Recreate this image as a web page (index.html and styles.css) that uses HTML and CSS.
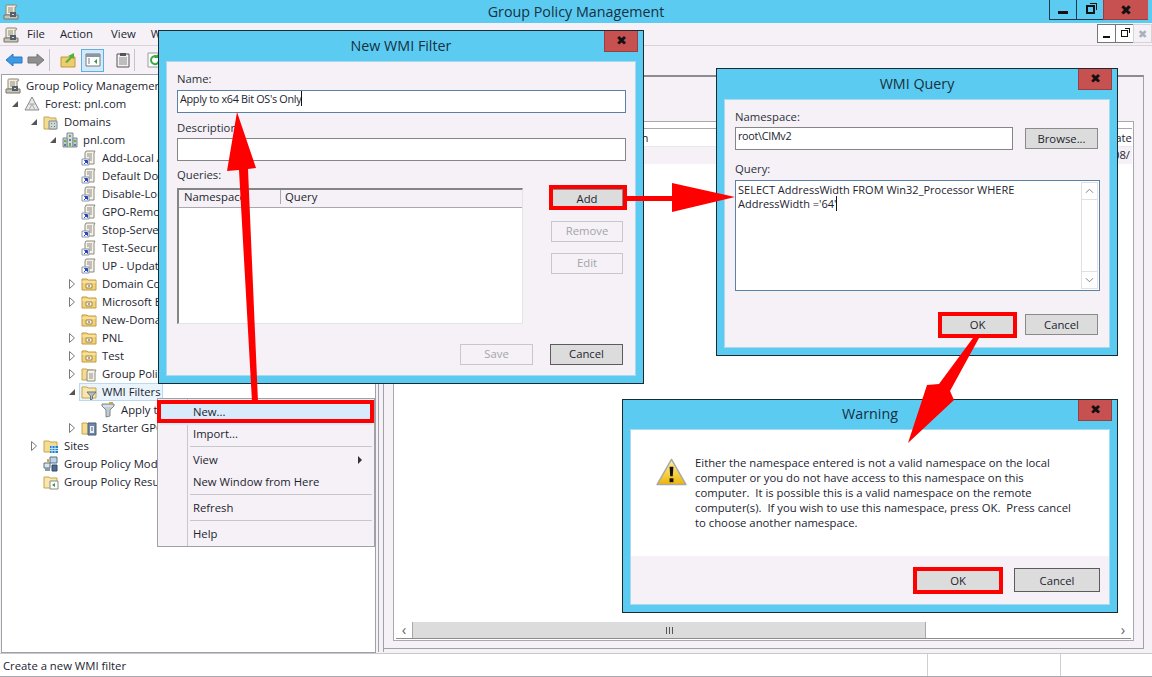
FILE: index.html
```html
<!DOCTYPE html>
<html lang="en">
<head>
  <meta charset="UTF-8" />
  <title>Group Policy Management</title>
  <link rel="stylesheet" href="styles.css">
</head>
<body>
  <svg class="defs" width="0" height="0">
    <symbol id="console" viewBox="0 0 16 16">
      <path d="M4 1h9c1 0 1 2 0 2h-1v8H3V3C3 2 3 1 4 1z" fill="#f3eeda" stroke="#8b8674"/>
      <path d="M5 4h5M5 6h5M5 8h5" stroke="#8e8e8e"/>
      <path d="M1 11h14v4H1z" fill="#c9c5b4" stroke="#77766c"/>
      <path d="M7 8h6v5H7z" fill="#55606b"/>
      <path d="M9 10h2v1H9z" fill="#d8dde0"/>
    </symbol>
    <symbol id="forest" viewBox="0 0 16 16">
      <path d="M8 1L15 14H1z" fill="#e8e8e8" stroke="#8b8b8b"/>
      <path d="M4.500 8h7M8 8l-3 6M8 8l3 6" stroke="#a8a8a8" fill="none"/>
    </symbol>
    <symbol id="domains" viewBox="0 0 16 16">
      <path d="M1 3h5l1 1h6v11H1z" fill="#f4dc92" stroke="#c8a44e"/>
      <path d="M6 7h8v8H6z" fill="#cfd6da" stroke="#7e8a92"/>
      <path d="M8 9h1v1H8zM11 9h1v1h-1zM8 12h1v1H8z" fill="#55a84a"/>
      <path d="M11 12h1v1h-1z" fill="#4a6e8e"/>
    </symbol>
    <symbol id="domain" viewBox="0 0 16 16">
      <path d="M5 1h6v14H5z" fill="#d5dade" stroke="#7e8a92"/>
      <path d="M1 6h4v9H1zM11 6h4v9h-4z" fill="#c2cbd1" stroke="#7e8a92"/>
      <path d="M7 3h2v2H7zM2 8h2v2H2zM12 8h2v2h-2zM7 11h2v3H7z" fill="#62b544"/>
      <path d="M7 7h2v2H7zM2 12h2v2H2zM12 12h2v2h-2z" fill="#5f7d96"/>
    </symbol>
    <symbol id="gpo" viewBox="0 0 16 16">
      <path d="M5 1h9l-1 2v11H4V3z" fill="#f5f1e4" stroke="#8b8b7e"/>
      <path d="M6 4h5M6 6h5M8 8h3M8 10h3" stroke="#8e8e8e"/>
      <path d="M1 9h7v6H1z" fill="#fff" stroke="#8a93a8"/>
      <path d="M3 14l3-3M3.500 10.500H6.500V13.500z" stroke="#2a46b8" fill="#2a46b8"/>
    </symbol>
    <symbol id="ou" viewBox="0 0 16 16">
      <path d="M1 3h5l1 1h8v10H1z" fill="#f2d27c" stroke="#c39a3e"/>
      <path d="M1 6h14" stroke="#fbeec0"/>
      <path d="M5 8h6v4H5z" fill="#fdf8e0" stroke="#a08a4a"/>
      <path d="M7 10h2" stroke="#555"/>
    </symbol>
    <symbol id="gpfolder" viewBox="0 0 16 16">
      <path d="M1 3h5l1 1h5v10H1z" fill="#f4dc92" stroke="#c8a44e"/>
      <path d="M7 4h8l-1 2v9H6V6z" fill="#f5f1e4" stroke="#8b8b7e"/>
      <path d="M8 8h4M8 10h4M8 12h4" stroke="#8e8e8e"/>
    </symbol>
    <symbol id="wmifolder" viewBox="0 0 16 16">
      <path d="M1 3h5l1 1h8v10H1z" fill="#f7e6ae" stroke="#c8a44e"/>
      <path d="M6 8h9l-3.500 4v3l-2 1v-4z" fill="#b4bcc2" stroke="#6c767c"/>
    </symbol>
    <symbol id="funnel" viewBox="0 0 16 16">
      <path d="M2 2h12v2l-4 4v6l-4 1V8L2 4z" fill="#c4ccd2" stroke="#7c868e"/>
      <path d="M3 4h10" stroke="#eef1f3"/>
      <path d="M9 1h4" stroke="#c8a44e" stroke-width="2"/>
    </symbol>
    <symbol id="starter" viewBox="0 0 16 16">
      <path d="M1 3h5l1 1h5v10H1z" fill="#f4dc92" stroke="#c8a44e"/>
      <path d="M7 3h8v12H7z" fill="#6e86a8" stroke="#4a5c74"/>
      <path d="M9 6h4v7H9z" fill="#e8eef4"/>
      <path d="M10 8h2M10 10h2" stroke="#4a5c74"/>
    </symbol>
    <symbol id="sites" viewBox="0 0 16 16">
      <path d="M1 3h5l1 1h7v10H1z" fill="#f4dc92" stroke="#c8a44e"/>
      <path d="M7 8h8v7H7z" fill="#1c82d4"/>
      <path d="M9 8v7M12 8v7M7 10.500h8M7 12.500h8" stroke="#bfe0f6"/>
    </symbol>
    <symbol id="model" viewBox="0 0 16 16">
      <path d="M7 1h7v6H7z" fill="#b8d4ec" stroke="#5e6e80"/>
      <path d="M1 7h6v5H1z" fill="#d8e4ee" stroke="#5e6e80"/>
      <path d="M2 12h5v3H2z" fill="#8a98a6"/>
      <path d="M9 9h5v6H9z" fill="#4a6a9a" stroke="#34465e"/>
      <path d="M4 3h2v3H4z" fill="#e2a23a"/>
    </symbol>
    <symbol id="results" viewBox="0 0 16 16">
      <path d="M1 3h5l1 1h7v10H1z" fill="#f7e6ae" stroke="#c8a44e"/>
      <path d="M7 7h8v8H7z" fill="#fff" stroke="#8b8b8b"/>
      <path d="M12 9l-3 2 3 2z" fill="#3c9a3c"/>
    </symbol>
    <symbol id="tw-open" viewBox="0 0 8 8"><path d="M7 1v6H1z" fill="#555"/></symbol>
    <symbol id="tw-closed" viewBox="0 0 8 12"><path d="M1.500 1.500l5 4.500-5 4.500z" fill="#fff" stroke="#7a7a7a"/></symbol>
  </svg>

  <header class="titlebar">
    <svg class="ico app-ico"><use href="#console"/></svg>
    <span class="titlebar-text">Group Policy Management</span>
    <div class="win-btns">
      <span class="win-btn"><span class="glyph-min"></span></span>
      <span class="win-btn"><span class="glyph-restore"></span></span>
      <span class="win-btn win-close">✖</span>
    </div>
  </header>

  <nav class="menubar">
    <svg class="ico app-ico"><use href="#console"/></svg>
    <span class="menu-item m-file">File</span>
    <span class="menu-item m-action">Action</span>
    <span class="menu-item m-view">View</span>
    <span class="menu-item m-window">Window</span>
    <span class="menu-item">Help</span>
    <div class="mdi-btns">
      <span class="mdi-btn"><span class="glyph-min small"></span></span>
      <span class="mdi-btn"><span class="glyph-restore small"></span></span>
      <span class="mdi-btn mdi-off">✖</span>
    </div>
  </nav>

  <div class="toolbar">
    <svg class="tool tool-back" viewBox="0 0 18 16"><path d="M1 8l7-6v3h9v6H8v3z" fill="#3d9be6" stroke="#2a78c0"/></svg>
    <svg class="tool tool-fwd" viewBox="0 0 18 16"><path d="M17 8l-7-6v3H1v6h9v3z" fill="#8f8f8f" stroke="#767676"/></svg>
    <span class="tool-sep"></span>
    <svg class="tool tool-up" viewBox="0 0 16 16"><path d="M1 5h14v10H1z" fill="#ecce6e" stroke="#c0993c"/><path d="M5 10l5-5-2-1 6-3v6l-2-1-5 5z" fill="#5cae3c"/></svg>
    <span class="tool-active">
      <svg class="tool" viewBox="0 0 16 16"><path d="M1 2h14v12H1z" fill="#fff" stroke="#6e7a84"/><path d="M1 2h14v3H1z" fill="#8a96a0"/><path d="M3 7h2M3 9h2M3 11h2" stroke="#6e7a84"/><path d="M12 7v5l-3-2.500z" fill="#3c9a3c"/></svg>
    </span>
    <svg class="tool tool-clip" viewBox="0 0 14 16"><path d="M1 2h12v13H1z" fill="#f2f2f2" stroke="#555"/><path d="M4 1h6v3H4z" fill="#555"/><path d="M3 6h8M3 8h8M3 10h8M3 12h8" stroke="#888"/></svg>
    <span class="tool-sep"></span>
    <svg class="tool tool-refresh" viewBox="0 0 16 16"><path d="M1 1h14v14H1z" fill="#fff" stroke="#9a9a9a"/><path d="M12 8a4 4 0 1 1-1.500-3" fill="none" stroke="#3ca83c" stroke-width="2"/><path d="M11 2v4H7z" fill="#3ca83c"/></svg>
  </div>

  <main class="panes">
    <section class="tree">
      <div class="row l0"><span class="twist"></span><span class="node"><svg class="ico"><use href="#console"/></svg>Group Policy Management</span></div>
      <div class="row l1"><svg class="twist"><use href="#tw-open"/></svg><span class="node"><svg class="ico"><use href="#forest"/></svg>Forest: pnl.com</span></div>
      <div class="row l2"><svg class="twist"><use href="#tw-open"/></svg><span class="node"><svg class="ico"><use href="#domains"/></svg>Domains</span></div>
      <div class="row l3"><svg class="twist"><use href="#tw-open"/></svg><span class="node"><svg class="ico"><use href="#domain"/></svg>pnl.com</span></div>
      <div class="row l4"><span class="twist"></span><span class="node"><svg class="ico"><use href="#gpo"/></svg>Add-Local Admins</span></div>
      <div class="row l4"><span class="twist"></span><span class="node"><svg class="ico"><use href="#gpo"/></svg>Default Dom</span></div>
      <div class="row l4"><span class="twist"></span><span class="node"><svg class="ico"><use href="#gpo"/></svg>Disable-Local</span></div>
      <div class="row l4"><span class="twist"></span><span class="node"><svg class="ico"><use href="#gpo"/></svg>GPO-Remote</span></div>
      <div class="row l4"><span class="twist"></span><span class="node"><svg class="ico"><use href="#gpo"/></svg>Stop-Server</span></div>
      <div class="row l4"><span class="twist"></span><span class="node"><svg class="ico"><use href="#gpo"/></svg>Test-Security</span></div>
      <div class="row l4"><span class="twist"></span><span class="node"><svg class="ico"><use href="#gpo"/></svg>UP - Update</span></div>
      <div class="row l4"><svg class="twist"><use href="#tw-closed"/></svg><span class="node"><svg class="ico"><use href="#ou"/></svg>Domain Controllers</span></div>
      <div class="row l4"><svg class="twist"><use href="#tw-closed"/></svg><span class="node"><svg class="ico"><use href="#ou"/></svg>Microsoft Exchange</span></div>
      <div class="row l4"><span class="twist"></span><span class="node"><svg class="ico"><use href="#ou"/></svg>New-Domain</span></div>
      <div class="row l4"><svg class="twist"><use href="#tw-closed"/></svg><span class="node"><svg class="ico"><use href="#ou"/></svg>PNL</span></div>
      <div class="row l4"><svg class="twist"><use href="#tw-closed"/></svg><span class="node"><svg class="ico"><use href="#ou"/></svg>Test</span></div>
      <div class="row l4"><svg class="twist"><use href="#tw-closed"/></svg><span class="node"><svg class="ico"><use href="#gpfolder"/></svg>Group Policy Objects</span></div>
      <div class="row l4"><svg class="twist"><use href="#tw-open"/></svg><span class="node node-sel"><svg class="ico"><use href="#wmifolder"/></svg>WMI Filters</span></div>
      <div class="row l5"><span class="twist"></span><span class="node"><svg class="ico"><use href="#funnel"/></svg>Apply to x64</span></div>
      <div class="row l4"><svg class="twist"><use href="#tw-closed"/></svg><span class="node"><svg class="ico"><use href="#starter"/></svg>Starter GPOs</span></div>
      <div class="row l2"><svg class="twist"><use href="#tw-closed"/></svg><span class="node"><svg class="ico"><use href="#sites"/></svg>Sites</span></div>
      <div class="row l2"><span class="twist"></span><span class="node"><svg class="ico"><use href="#model"/></svg>Group Policy Modeling</span></div>
      <div class="row l2"><span class="twist"></span><span class="node"><svg class="ico"><use href="#results"/></svg>Group Policy Results</span></div>
    </section>

    <div class="splitter"></div>

    <section class="detail">
      <div class="frame">
        <div class="table">
          <div class="thead"><span class="col-domain">Domain</span><span class="col-date">Date</span></div>
          <div class="tgroup"><span class="col-last">2008/</span></div>
          <div class="tbody"></div>
        </div>
        <div class="hscroll">
          <span class="sb-btn">‹</span>
          <span class="sb-thumb"><span class="grip"></span></span>
          <span class="sb-rest"></span>
          <span class="sb-btn">›</span>
        </div>
      </div>
    </section>
  </main>

  <footer class="statusbar">
    <span class="st-main">Create a new WMI filter</span>
    <span class="st-cell st-a"></span>
    <span class="st-cell st-b"></span>
  </footer>

  <div class="ctx-menu">
    <div class="ctx-item ctx-hot">New...</div>
    <div class="ctx-item">Import...</div>
    <div class="ctx-sep"></div>
    <div class="ctx-item">View<span class="ctx-arrow"></span></div>
    <div class="ctx-item">New Window from Here</div>
    <div class="ctx-sep"></div>
    <div class="ctx-item">Refresh</div>
    <div class="ctx-sep"></div>
    <div class="ctx-item">Help</div>
  </div>

  <div class="dialog dlg-filter">
    <div class="dlg-title">New WMI Filter</div>
    <span class="dlg-close">✖</span>
    <div class="dlg-body">
      <label class="lbl lbl-name">Name:</label>
      <div class="field field-focus">Apply to x64 Bit OS's Only<span class="caret"></span></div>
      <label class="lbl lbl-desc">Description:</label>
      <div class="field"></div>
      <label class="lbl lbl-queries">Queries:</label>
      <div class="queries">
        <div class="qlist">
          <div class="qhead"><span class="qh-ns">Namespace</span><span class="qh-q">Query</span></div>
        </div>
        <div class="qbtns">
          <button class="btn">Add</button>
          <button class="btn btn-off">Remove</button>
          <button class="btn btn-off">Edit</button>
        </div>
      </div>
      <div class="dlg-foot foot-filter">
        <button class="btn btn-off">Save</button>
        <button class="btn btn-dark">Cancel</button>
      </div>
    </div>
  </div>

  <div class="dialog dlg-query">
    <div class="dlg-title">WMI Query</div>
    <span class="dlg-close">✖</span>
    <div class="dlg-body">
      <label class="lbl lbl-ns">Namespace:</label>
      <div class="ns-row">
        <div class="field field-ns">root\CIMv2</div>
        <button class="btn">Browse...</button>
      </div>
      <label class="lbl lbl-query">Query:</label>
      <div class="textarea">
        <div class="ta-text">SELECT AddressWidth FROM Win32_Processor WHERE<br>AddressWidth ='64'<span class="caret"></span></div>
        <div class="vscroll">
          <span class="vs-btn"><svg viewBox="0 0 10 6"><path d="M1 5l4-4 4 4" fill="none" stroke="#777"/></svg></span>
          <span class="vs-track"></span>
          <span class="vs-btn"><svg viewBox="0 0 10 6"><path d="M1 1l4 4 4-4" fill="none" stroke="#777"/></svg></span>
        </div>
      </div>
      <div class="dlg-foot foot-query">
        <button class="btn">OK</button>
        <button class="btn">Cancel</button>
      </div>
    </div>
  </div>

  <div class="dialog dlg-warn">
    <div class="dlg-title">Warning</div>
    <span class="dlg-close">✖</span>
    <div class="warn-body">
      <div class="warn-main">
        <svg class="warn-ico" viewBox="0 0 32 30">
          <defs><linearGradient id="wg" x1="0" y1="0" x2="0" y2="1"><stop offset="0" stop-color="#fdf3a0"/><stop offset="1" stop-color="#f0b400"/></linearGradient></defs>
          <path d="M16 1.500L31 27.500H1z" fill="url(#wg)" stroke="#a8a8a8" stroke-width="1.500" stroke-linejoin="round"/>
          <path d="M14 9h4l-.7 10h-2.600z" fill="#111"/>
          <path d="M14 21h4v4h-4z" fill="#111"/>
        </svg>
        <div class="warn-text">Either the namespace entered is not a valid namespace on the local<br>computer or you do not have access to this namespace on this<br>computer.  It is possible this is a valid namespace on the remote<br>computer(s).  If you wish to use this namespace, press OK.  Press cancel<br>to choose another namespace.</div>
      </div>
      <div class="warn-foot">
        <button class="btn btn-wide">OK</button>
        <button class="btn btn-wide btn-dark">Cancel</button>
      </div>
    </div>
  </div>

  <!-- red arrows and boxes drawn on top of the screenshot -->
  <svg class="marks" viewBox="0 0 1152 677">
    <g fill="none" stroke="#f00" stroke-width="4">
      <rect x="551" y="187" width="74" height="21"/>
      <rect x="940" y="314" width="75" height="22"/>
      <rect x="915" y="569" width="86" height="23"/>
      <rect x="159" y="402" width="213" height="19"/>
    </g>
    <g fill="#f00">
      <path d="M237 112L227 171L239 170L252 402L258 402L248 169L256 168z"/>
      <path d="M627 196H672V183L735 197L672 212V201H627z"/>
      <path d="M973 338H979L950 391L954 400L908 443L927 385L939 384z"/>
    </g>
  </svg>
</body>
</html>
```

FILE: styles.css
```css
* {
  box-sizing: border-box;
  margin: 0;
  padding: 0;
}

html, body {
  width: 1152px;
  height: 677px;
  overflow: hidden;
}

body {
  position: relative;
  display: flex;
  flex-direction: column;
  background: #f5f1f6;
  color: #1c2430;
  font-family: "Open Sans", sans-serif;
  font-size: 11.3px;
  line-height: 14px;
}

.defs {
  position: absolute;
}

.ico {
  width: 16px;
  height: 16px;
  flex: none;
}

/* main window */
.titlebar {
  height: 23px;
  flex: none;
  display: flex;
  align-items: center;
  justify-content: center;
  position: relative;
  background: #5ccbf2;
}

.titlebar-text {
  font-size: 14.3px;
  color: #17303f;
}

.app-ico {
  position: absolute;
  left: 3px;
  top: 4px;
}

.win-btns {
  position: absolute;
  right: 4px;
  top: 0;
  display: flex;
  height: 20px;
}

.win-btn {
  width: 27px;
  display: flex;
  align-items: center;
  justify-content: center;
  border-left: 1px solid #1d3a4a;
  border-bottom: 1px solid #1d3a4a;
}

.win-close {
  width: 45px;
  background: #c75050;
  color: #111;
  font-size: 14px;
  border-color: #9c3d3d;
}

.glyph-min {
  width: 10px;
  height: 3px;
  margin-top: 6px;
  background: #111;
}

.glyph-min.small {
  width: 7px;
  height: 2px;
}

.glyph-restore {
  width: 9px;
  height: 9px;
  border: 2px solid #111;
  box-shadow: 2px -2px 0 -1px #5ccbf2, 3px -3px 0 -1px #111;
}

.glyph-restore.small {
  width: 7px;
  height: 7px;
  border-width: 1px;
  box-shadow: 2px -2px 0 -1px #fff, 3px -3px 0 -1px #111;
}

.menubar {
  height: 23px;
  flex: none;
  position: relative;
  display: flex;
  align-items: center;
  padding-left: 27px;
  border-bottom: 1px solid #d8d4da;
}

.menu-item {
  margin-right: 21px;
}

.m-file {
  margin-right: 15px;
}

.m-action {
  margin-right: 18px;
}

.m-view {
  margin-right: 15px;
}

.mdi-btns {
  position: absolute;
  right: 0;
  top: 1px;
  display: flex;
  height: 20px;
  background: #f5f1f6;
}

.mdi-btn {
  width: 19px;
  height: 19px;
  display: flex;
  align-items: center;
  justify-content: center;
  background: #fff;
  border: 1px solid #777;
  margin-left: -1px;
}

.mdi-off {
  border-color: #d4d4d8;
  background: #f5f1f6;
  color: #a8b0bc;
  font-size: 11px;
}

.toolbar {
  height: 28px;
  flex: none;
  display: flex;
  align-items: center;
  padding-left: 5px;
}

.tool {
  width: 16px;
  height: 16px;
  flex: none;
}

.tool-back, .tool-fwd {
  width: 18px;
}

.tool-fwd {
  margin-left: 4px;
}

.tool-sep {
  width: 1px;
  height: 22px;
  background: #c4c4c8;
  margin-left: 4px;
}

.tool-up {
  margin-left: 10px;
}

.tool-active {
  width: 23px;
  height: 23px;
  margin-left: 5px;
  display: flex;
  align-items: center;
  justify-content: center;
  background: #d5e8f6;
  border: 1px solid #5db0e6;
}

.tool-clip {
  width: 14px;
  margin-left: 12px;
}

.tool-refresh {
  margin-left: 12px;
}

.panes {
  height: 579px;
  flex: none;
  display: flex;
}

.tree {
  width: 375px;
  flex: none;
  margin-left: 1px;
  padding-top: 2px;
  background: #fff;
  border: 1px solid #a0a0a6;
}

.row {
  height: 18px;
  display: flex;
  align-items: center;
  white-space: nowrap;
}

.l0 { padding-left: 3px; }
.l1 { padding-left: 9px; }
.l2 { padding-left: 28px; }
.l3 { padding-left: 47px; }
.l4 { padding-left: 66px; }
.l5 { padding-left: 85px; }

.twist {
  width: 8px;
  height: 12px;
  flex: none;
  margin-right: 5px;
}

.l0 .twist {
  width: 0;
  margin-right: 0;
}

.node {
  display: flex;
  align-items: center;
  gap: 5px;
  height: 18px;
  padding-right: 2px;
}

.node-sel {
  background: #e9f4fc;
  outline: 1px solid #bcd9f0;
  outline-offset: -1px;
  margin-left: -2px;
  padding-left: 2px;
}

.splitter {
  width: 6px;
  flex: none;
  margin-left: 2px;
  border-left: 1px solid #a0a0a6;
  border-right: 1px solid #a0a0a6;
  height: 578px;
}

.detail {
  width: 761px;
  height: 574px;
  flex: none;
  margin-left: -1px;
  margin-top: 1px;
  padding: 44px 9px 9px 9px;
  border: 1px solid #a0a0a6;
  border-top: 2px solid #8c8c8c;
}

.frame {
  height: 520px;
  background: #fff;
  border: 1px solid #a8a8ae;
  display: flex;
  flex-direction: column;
  padding: 6px 1px 0 1px;
}

.table {
  flex: 1;
  display: flex;
  flex-direction: column;
  border-top: 1px solid #a8a8ae;
}

.thead {
  height: 18px;
  flex: none;
  position: relative;
  border-bottom: 1px solid #e8e8ec;
}

.col-domain {
  margin-left: 212px;
  line-height: 18px;
}

.col-date {
  position: absolute;
  left: 712px;
  line-height: 18px;
}

.tgroup {
  height: 17px;
  flex: none;
  position: relative;
  background: #f5f1f6;
}

.col-last {
  position: absolute;
  left: 705px;
  line-height: 16px;
}

.tbody {
  flex: 1;
}

.hscroll {
  height: 17px;
  flex: none;
  display: flex;
  margin: 0 1px 1px 1px;
  border-bottom: 1px solid #8c8c8c;
}

.sb-btn {
  width: 16px;
  flex: none;
  text-align: center;
  color: #666;
  font-size: 15px;
  line-height: 14px;
  background: #fff;
}

.sb-thumb {
  width: 514px;
  flex: none;
  display: flex;
  align-items: center;
  justify-content: center;
  background: #dcdcdc;
  border-left: 1px solid #a8a8a8;
  border-right: 1px solid #a8a8a8;
}

.grip {
  width: 7px;
  height: 7px;
  background: repeating-linear-gradient(90deg, #555 0 1px, #dcdcdc 1px 3px);
}

.sb-rest {
  flex: 1;
}

.statusbar {
  height: 24px;
  flex: none;
  display: flex;
  align-items: center;
  background: #fff;
  border-top: 1px solid #c8c8cc;
  border-bottom: 1px solid #a8a8ae;
  padding-left: 3px;
}

.st-main {
  width: 924px;
  padding-top: 2px;
}

.st-cell {
  height: 22px;
  border-left: 1px solid #d0d0d4;
}

.st-a {
  width: 133px;
}

.st-b {
  flex: 1;
}

/* context menu */
.ctx-menu {
  position: absolute;
  left: 157px;
  top: 398px;
  width: 218px;
  height: 149px;
  padding: 2px;
  background: linear-gradient(90deg, #f5f1f6 29px, #c8c8cc 29px, #c8c8cc 30px, #f5f1f6 30px);
  border: 1px solid #a0a0a6;
}

.ctx-item {
  height: 22px;
  line-height: 22px;
  padding-left: 33px;
  position: relative;
}

.ctx-hot {
  height: 24px;
  margin-bottom: -2px;
  background: #d9eafa;
}

.ctx-sep {
  height: 1px;
  margin: 1px 0 2px 30px;
  background: #c8c8cc;
}

.ctx-arrow {
  position: absolute;
  right: 10px;
  top: 7px;
  border-left: 4px solid #333;
  border-top: 4px solid transparent;
  border-bottom: 4px solid transparent;
}

/* dialogs */
.dialog {
  position: absolute;
  display: flex;
  flex-direction: column;
  background: #5ccbf2;
  border: 1px solid #1c2a30;
  padding: 0 7px 7px 7px;
}

.dlg-filter {
  left: 158px;
  top: 30px;
  width: 486px;
  height: 354px;
}

.dlg-query {
  left: 716px;
  top: 68px;
  width: 402px;
  height: 288px;
}

.dlg-warn {
  left: 622px;
  top: 399px;
  width: 496px;
  height: 214px;
}

.dlg-title {
  height: 30px;
  flex: none;
  text-align: center;
  font-size: 14.3px;
  line-height: 30px;
  color: #17303f;
}

.dlg-warn .dlg-title {
  height: 29px;
  line-height: 28px;
}

.dlg-close {
  position: absolute;
  right: 5px;
  top: 0;
  width: 34px;
  height: 21px;
  background: #c75050;
  border: 1px solid #96403f;
  border-top: none;
  color: #111;
  text-align: center;
  font-size: 13px;
  line-height: 19px;
}

.dlg-body {
  flex: 1;
  padding: 10px 9px 0 10px;
  background: #f5f1f6;
  border: 1px solid #a8d9ee;
}

.lbl {
  display: block;
  color: #2a3038;
}

.field {
  height: 23px;
  padding-left: 2px;
  font-size: 10.8px;
  letter-spacing: -0.3px;
  line-height: 16px;
  background: #fff;
  border: 1px solid #858585;
  white-space: nowrap;
}

.field-focus {
  border: 1px solid #5a82a8;
}

.caret {
  display: inline-block;
  width: 1px;
  height: 15px;
  background: #111;
  vertical-align: -3px;
}

.lbl-name {
  margin-bottom: 4px;
}

.lbl-desc {
  margin: 8px 0 3px;
}

.lbl-queries {
  margin: 7px 0 6px;
}

.queries {
  display: flex;
  gap: 28px;
}

.qlist {
  width: 346px;
  height: 136px;
  background: #fff;
  border: 1px solid #e4e4e8;
  border-top: 2px solid #858585;
  border-left: 2px solid #858585;
}

.qhead {
  height: 18px;
  padding-bottom: 3px;
  display: flex;
  align-items: center;
  background: #f5f1f6;
  border-bottom: 1px solid #a8a8ae;
}

.qh-ns {
  width: 102px;
  padding-left: 5px;
  border-right: 1px solid #a8a8ae;
}

.qh-q {
  padding-left: 4px;
}

.qbtns {
  width: 72px;
  display: flex;
  flex-direction: column;
  gap: 11px;
}

.btn {
  height: 21px;
  background: #dcdcdc;
  border: 1px solid #8a8a8a;
  color: #1c2430;
  font: inherit;
  line-height: 17px;
}

.dlg-filter .btn {
  padding-bottom: 2px;
}

.qbtns .btn:first-child {
  margin-top: 1px;
}

.btn-off {
  background: #f5f1f6;
  border-color: #c8c8cc;
  color: #a4a4a8;
}

.btn-dark {
  border-color: #5c5c5c;
}

.dlg-foot {
  display: flex;
  justify-content: flex-end;
}

.foot-filter {
  margin-top: 20px;
  gap: 17px;
  padding-right: 3px;
}

.foot-filter .btn {
  width: 73px;
}

.lbl-ns {
  margin-bottom: 3px;
}

.ns-row {
  display: flex;
  align-items: center;
  gap: 12px;
}

.field-ns {
  width: 278px;
}

.ns-row .btn {
  width: 73px;
}

.lbl-query {
  margin: 12px 0 4px;
}

.textarea {
  width: 365px;
  height: 111px;
  display: flex;
  justify-content: space-between;
  padding: 1px 1px 1px 2px;
  background: #fff;
  border: 1px solid #5a82a8;
}

.ta-text {
  font-size: 11px;
  line-height: 13px;
  white-space: nowrap;
  padding-top: 1px;
}

.vscroll {
  width: 17px;
  display: flex;
  flex-direction: column;
  border: 1px solid #e0e0e4;
}

.vs-btn {
  height: 16px;
  flex: none;
  display: flex;
  align-items: center;
  justify-content: center;
}

.vs-btn svg {
  width: 9px;
  height: 6px;
}

.vs-track {
  flex: 1;
  border-top: 1px solid #e0e0e4;
  border-bottom: 1px solid #e0e0e4;
}

.foot-query {
  margin-top: 23px;
  gap: 11px;
  padding-right: 2px;
}

.foot-query .btn {
  width: 73px;
}

.warn-body {
  flex: 1;
  display: flex;
  flex-direction: column;
  border: 1px solid #a8d9ee;
  background: #f5f1f6;
}

.warn-main {
  height: 126px;
  flex: none;
  display: flex;
  gap: 8px;
  padding: 25px 0 0 25px;
  background: #fff;
}

.warn-ico {
  width: 31px;
  height: 29px;
  flex: none;
  margin-top: 3px;
}

.warn-text {
  line-height: 15px;
  white-space: pre;
}

.warn-foot {
  flex: 1;
  display: flex;
  justify-content: flex-end;
  align-items: flex-start;
  gap: 13px;
  padding: 12px 9px 0 0;
}

.btn-wide {
  width: 86px;
  height: 24px;
}

/* annotations */
.marks {
  position: absolute;
  left: 0;
  top: 0;
  width: 1152px;
  height: 677px;
  pointer-events: none;
}
```
